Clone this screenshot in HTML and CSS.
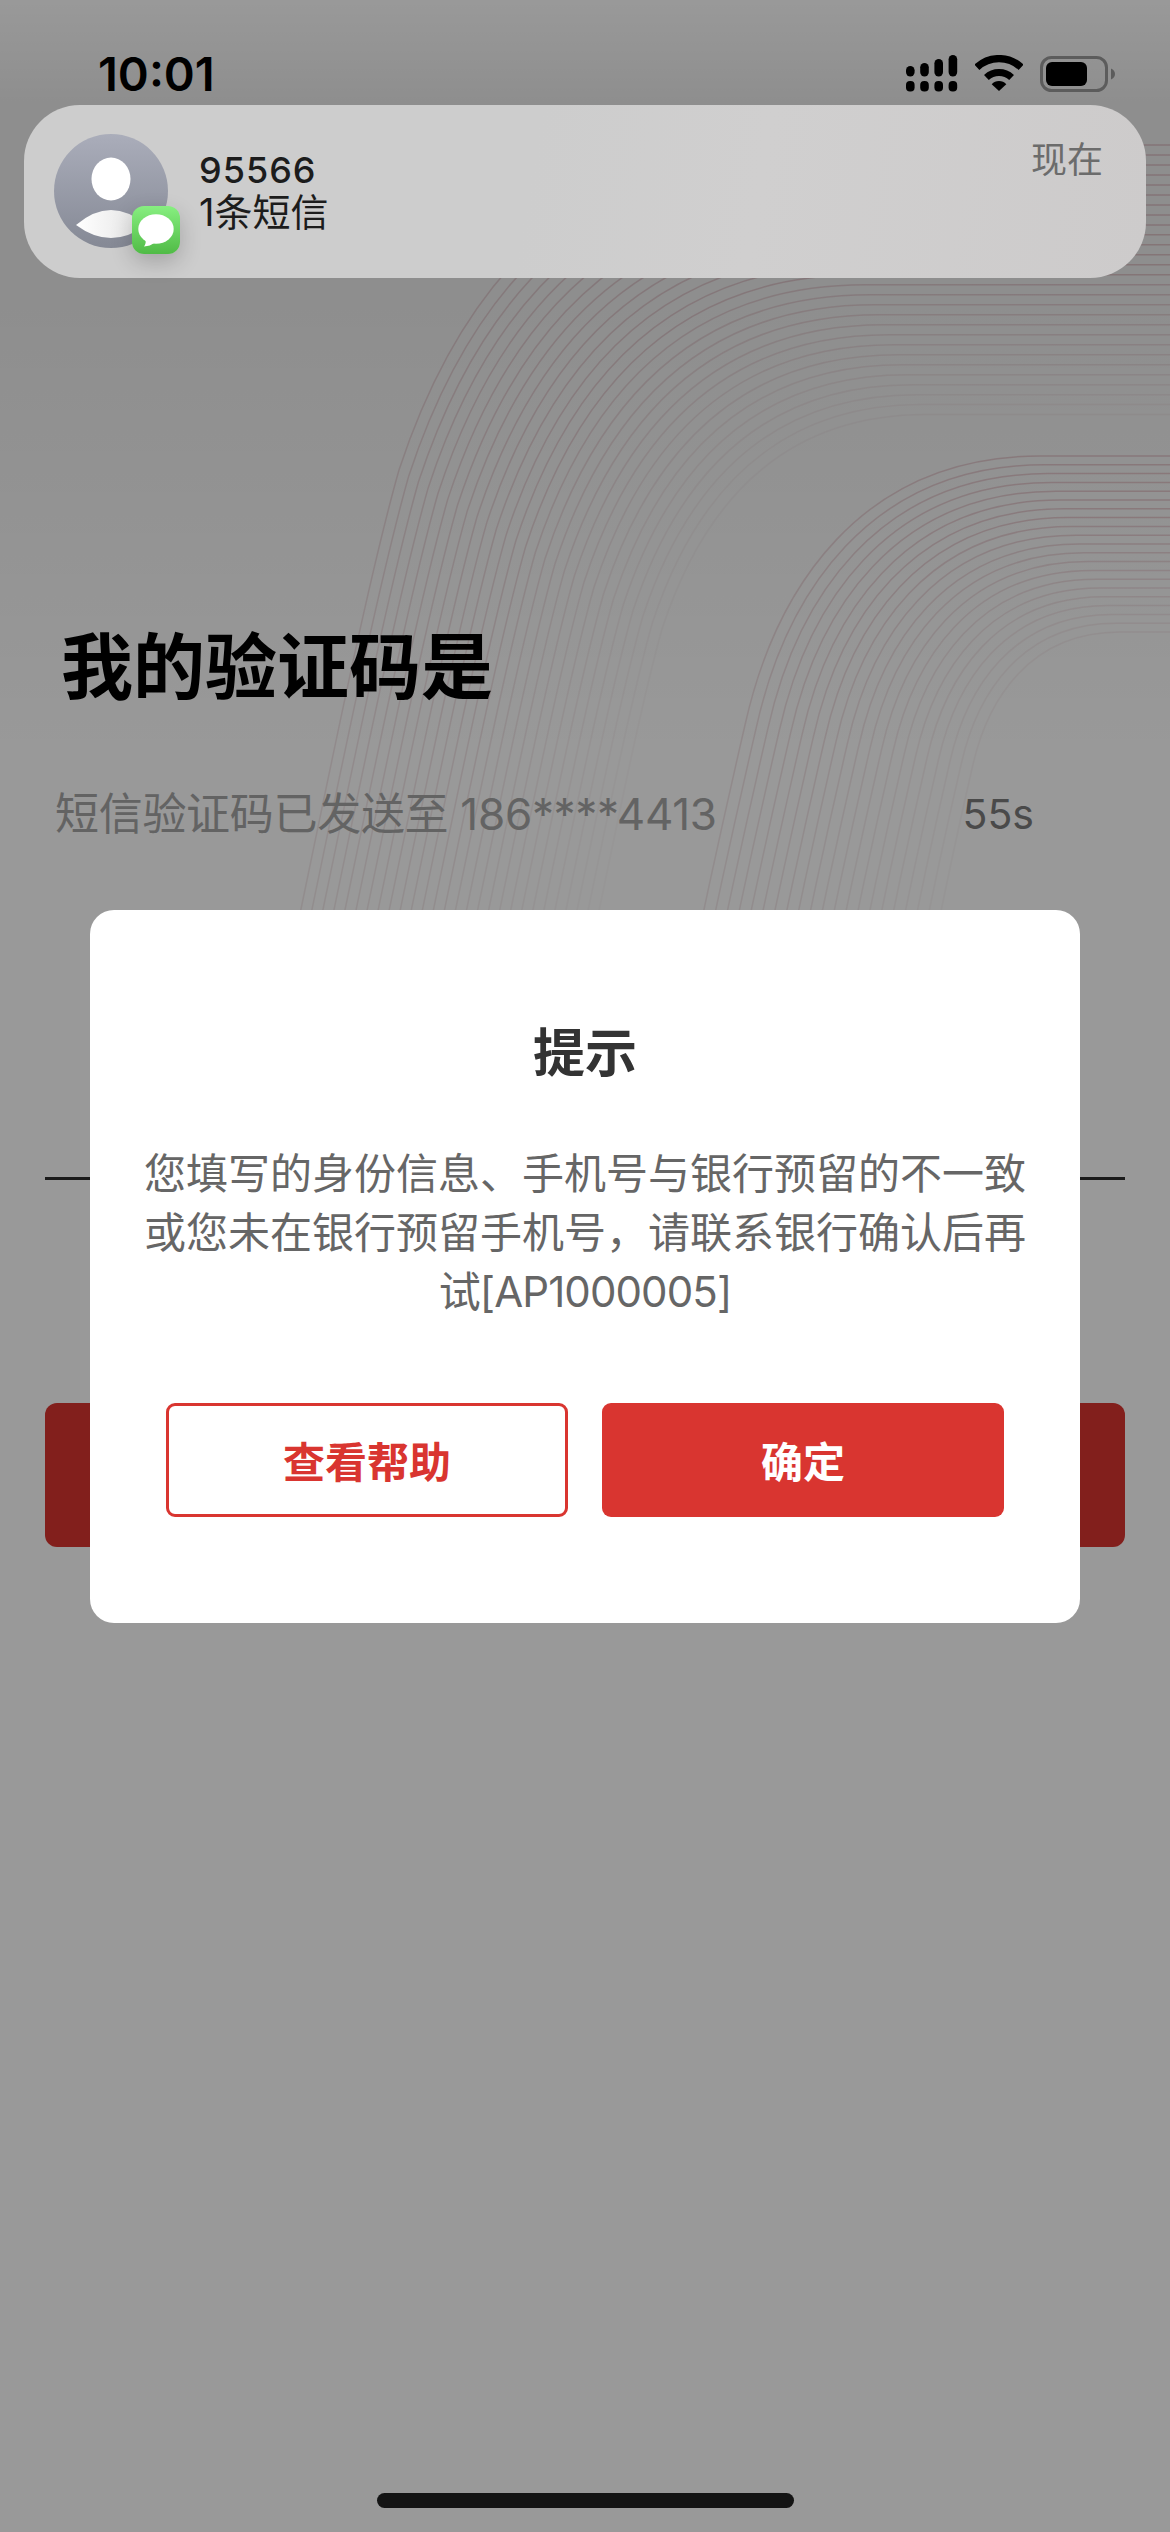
FILE: index.html
```html
<!DOCTYPE html>
<html lang="zh-CN">
<head>
<meta charset="utf-8">
<title>验证码</title>
<link rel="stylesheet" href="styles.css">
</head>
<body>
<div class="phone">
  <svg class="waves" width="1170" height="1000" viewBox="0 0 1170 1000" aria-hidden="true">
    <defs>
      <linearGradient id="fadeA" gradientUnits="userSpaceOnUse" x1="1100" y1="180" x2="320" y2="900">
        <stop offset="0" stop-color="#e6bdc4"/>
        <stop offset=".55" stop-color="#e8cbd0"/>
        <stop offset="1" stop-color="#efe2e4"/>
      </linearGradient>
      <linearGradient id="fadeB" gradientUnits="userSpaceOnUse" x1="1100" y1="460" x2="720" y2="880">
        <stop offset="0" stop-color="#e6bdc4"/>
        <stop offset="1" stop-color="#eee0e2"/>
      </linearGradient>
      <path id="curveA" d="M282 1000C320 820 365 590 399 470C445 330 545 145 800 145L1500 145" fill="none" vector-effect="non-scaling-stroke"/>
      <path id="curveB" d="M665 1100C700 920 730 790 745 725C775 590 860 456 1040 456L1600 456" fill="none" vector-effect="non-scaling-stroke"/>
    </defs>
    <g class="wave-group" stroke="url(#fadeA)">
      <use href="#curveA"/>
      <use href="#curveA" transform="matrix(.9874 0 0 .9874 14.79 11.82)"/>
      <use href="#curveA" transform="matrix(.9747 0 0 .9747 29.58 23.64)"/>
      <use href="#curveA" transform="matrix(.9621 0 0 .9621 44.36 35.46)"/>
      <use href="#curveA" transform="matrix(.9494 0 0 .9494 59.15 47.27)"/>
      <use href="#curveA" transform="matrix(.9368 0 0 .9368 73.94 59.09)"/>
      <use href="#curveA" transform="matrix(.9242 0 0 .9242 88.73 70.91)"/>
      <use href="#curveA" transform="matrix(.9115 0 0 .9115 103.52 82.73)"/>
      <use href="#curveA" transform="matrix(.8989 0 0 .8989 118.31 94.55)"/>
      <use href="#curveA" transform="matrix(.8862 0 0 .8862 133.1 106.37)"/>
      <use href="#curveA" transform="matrix(.8736 0 0 .8736 147.89 118.18)"/>
      <use href="#curveA" transform="matrix(.861 0 0 .861 162.68 130)"/>
      <use href="#curveA" transform="matrix(.8483 0 0 .8483 177.46 141.82)"/>
      <use href="#curveA" transform="matrix(.8357 0 0 .8357 192.25 153.64)"/>
      <use href="#curveA" transform="matrix(.823 0 0 .823 207.04 165.46)" opacity=".85"/>
      <use href="#curveA" transform="matrix(.8104 0 0 .8104 221.83 177.27)" opacity=".8"/>
      <use href="#curveA" transform="matrix(.7978 0 0 .7978 236.62 189.09)" opacity=".75"/>
      <use href="#curveA" transform="matrix(.7851 0 0 .7851 251.41 200.91)" opacity=".7"/>
      <use href="#curveA" transform="matrix(.7725 0 0 .7725 266.2 212.73)" opacity=".65"/>
      <use href="#curveA" transform="matrix(.7598 0 0 .7598 280.99 224.55)" opacity=".6"/>
      <use href="#curveA" transform="matrix(.7472 0 0 .7472 295.78 236.36)" opacity=".55"/>
      <use href="#curveA" transform="matrix(.7346 0 0 .7346 310.57 248.18)" opacity=".5"/>
      <use href="#curveA" transform="matrix(.7219 0 0 .7219 325.36 260)" opacity=".45"/>
      <use href="#curveA" transform="matrix(.7093 0 0 .7093 340.14 271.82)" opacity=".4"/>
      <use href="#curveA" transform="matrix(.6966 0 0 .6966 354.93 283.64)" opacity=".35"/>
      <use href="#curveA" transform="matrix(.684 0 0 .684 369.72 295.45)" opacity=".3"/>
      <use href="#curveA" transform="matrix(.6714 0 0 .6714 384.51 307.27)" opacity=".25"/>
      <use href="#curveA" transform="matrix(.6587 0 0 .6587 399.3 319.09)" opacity=".2"/>
    </g>
    <g class="wave-group" stroke="url(#fadeB)">
      <use href="#curveB"/>
      <use href="#curveB" transform="matrix(.975 0 0 .975 30 20.2)"/>
      <use href="#curveB" transform="matrix(.95 0 0 .95 60 40.4)"/>
      <use href="#curveB" transform="matrix(.925 0 0 .925 90 60.6)"/>
      <use href="#curveB" transform="matrix(.9 0 0 .9 120 80.8)"/>
      <use href="#curveB" transform="matrix(.875 0 0 .875 150 101)"/>
      <use href="#curveB" transform="matrix(.85 0 0 .85 180 121.2)"/>
      <use href="#curveB" transform="matrix(.825 0 0 .825 210 141.4)"/>
      <use href="#curveB" transform="matrix(.8 0 0 .8 240 161.6)" opacity=".9"/>
      <use href="#curveB" transform="matrix(.775 0 0 .775 270 181.8)" opacity=".85"/>
      <use href="#curveB" transform="matrix(.75 0 0 .75 300 202)" opacity=".8"/>
      <use href="#curveB" transform="matrix(.725 0 0 .725 330 222.2)" opacity=".75"/>
      <use href="#curveB" transform="matrix(.7 0 0 .7 360 242.4)" opacity=".7"/>
      <use href="#curveB" transform="matrix(.675 0 0 .675 390 262.6)" opacity=".65"/>
      <use href="#curveB" transform="matrix(.65 0 0 .65 420 282.8)" opacity=".6"/>
      <use href="#curveB" transform="matrix(.625 0 0 .625 450 303)" opacity=".55"/>
      <use href="#curveB" transform="matrix(.6 0 0 .6 480 323.2)" opacity=".5"/>
      <use href="#curveB" transform="matrix(.575 0 0 .575 510 343.4)" opacity=".45"/>
      <use href="#curveB" transform="matrix(.55 0 0 .55 540 363.6)" opacity=".4"/>
      <use href="#curveB" transform="matrix(.525 0 0 .525 570 383.8)" opacity=".35"/>
      <use href="#curveB" transform="matrix(.5 0 0 .5 600 404)" opacity=".3"/>
    </g>
  </svg>

  <main class="page">
    <h1 class="heading">我的验证码是</h1>
    <div class="sent-row">
      <span class="sent-text">短信验证码已发送至 186****4413</span>
      <span class="countdown">55s</span>
    </div>
    <div class="code-line"></div>
    <div class="next-button"></div>
  </main>

  <div class="scrim"></div>
  <div class="top-shade"></div>

  <header class="status">
    <span class="clock">10:01</span>
    <div class="status-icons">
      <svg class="icon-signal" width="52" height="37" viewBox="0 0 52 37" aria-hidden="true">
        <rect x="0" y="11" width="8.6" height="10.4" rx="4.3"/>
        <rect x="14.2" y="8" width="8.6" height="13.4" rx="4.3"/>
        <rect x="28.4" y="4" width="8.6" height="17.4" rx="4.3"/>
        <rect x="42.6" y="0" width="8.6" height="21.4" rx="4.3"/>
        <rect x="0" y="26" width="8.6" height="10.6" rx="4"/>
        <rect x="14.2" y="26" width="8.6" height="10.6" rx="4"/>
        <rect x="28.4" y="26" width="8.6" height="10.6" rx="4"/>
        <rect x="42.6" y="26" width="8.6" height="10.6" rx="4"/>
      </svg>
      <svg class="icon-wifi" width="48" height="36" viewBox="0 0 48 36" aria-hidden="true">
        <path class="wifi-band" stroke-width="7.3" d="M1.9 12.3A32.4 32.4 0 0 1 46.1 12.3"/>
        <path class="wifi-band" stroke-width="7" d="M11.4 22.5A18.5 18.5 0 0 1 36.6 22.5"/>
        <path d="M24 36L16.7 29.2A10 10 0 0 1 31.3 29.2Z"/>
      </svg>
      <svg class="icon-battery" width="75" height="36" viewBox="0 0 75 36" aria-hidden="true">
        <rect class="battery-shell" x="1.5" y="1.5" width="65" height="33" rx="10"/>
        <rect x="6" y="6" width="41" height="24" rx="6"/>
        <path class="battery-nub" d="M71 12.5C73.5 13.5 75 15.5 75 18C75 20.5 73.5 22.5 71 23.5Z"/>
      </svg>
    </div>
  </header>

  <section class="banner">
    <div class="avatar-wrap">
      <svg class="avatar" width="114" height="114" viewBox="0 0 114 114" aria-hidden="true">
        <defs>
          <linearGradient id="avatarBg" x1="0" y1="0" x2="0" y2="1">
            <stop offset="0" stop-color="#aaadba"/>
            <stop offset="1" stop-color="#858995"/>
          </linearGradient>
          <linearGradient id="avatarBody" x1="0" y1="0" x2="1" y2="0">
            <stop offset="0" stop-color="#ffffff"/>
            <stop offset="1" stop-color="#e2e2e2"/>
          </linearGradient>
        </defs>
        <circle cx="57" cy="57" r="57" fill="url(#avatarBg)"/>
        <ellipse cx="57" cy="45" rx="19.5" ry="21.5" fill="#fff"/>
        <path d="M22 91Q57 61 92 91Q57 117 22 91Z" fill="url(#avatarBody)"/>
      </svg>
      <div class="badge">
        <svg width="48" height="48" viewBox="0 0 48 48" aria-hidden="true">
          <ellipse cx="24" cy="23" rx="17.7" ry="14.7" fill="#fff"/>
          <path d="M13.5 32Q14.5 37 12 40.5Q18.5 40 22 37Z" fill="#fff"/>
        </svg>
      </div>
    </div>
    <div class="banner-text">
      <div class="banner-title">95566</div>
      <div class="banner-body">1条短信</div>
    </div>
    <span class="banner-time">现在</span>
  </section>

  <div class="modal-layer">
    <div class="modal">
      <h2 class="modal-title">提示</h2>
      <p class="modal-text">您填写的身份信息、手机号与银行预留的不一致或您未在银行预留手机号，请联系银行确认后再<span class="modal-last">试[AP1000005]</span></p>
      <div class="modal-actions">
        <button class="btn btn-outline" type="button">查看帮助</button>
        <button class="btn btn-solid" type="button">确定</button>
      </div>
    </div>
  </div>

  <div class="home-bar"></div>
</div>
</body>
</html>
```

FILE: styles.css
```css
* { box-sizing: border-box; }

html, body {
  margin: 0;
  padding: 0;
  background: #fff;
}

body {
  font-family: Inter, "Noto Sans CJK SC", "Noto Sans", sans-serif;
}

.phone {
  position: relative;
  width: 1170px;
  height: 2532px;
  overflow: hidden;
  background: #fff;
}

.waves {
  position: absolute;
  left: 0;
  top: 0;
}

.wave-group {
  stroke-width: 1.5;
  fill: none;
  opacity: .68;
}

/* underlying page */
.page {
  position: relative;
  padding: 631px 45px 0;
}

.heading {
  margin: 0 0 0 16px;
  font-size: 72px;
  line-height: 72px;
  font-weight: 700;
  color: #000;
}

.sent-row {
  display: flex;
  align-items: center;
  margin: 81px 0 0 10px;
  height: 60px;
  color: #a6a6a6;
}

.sent-text {
  font-size: 44px;
  line-height: 60px;
  letter-spacing: -.3px;
}

.countdown {
  position: relative;
  margin-left: auto;
  margin-right: 91px;
  font-size: 41px;
  line-height: 60px;
  color: #7c7c7c;
}

.code-line {
  height: 3px;
  margin-top: 333px;
  background: #2e2e2e;
}

.next-button {
  height: 144px;
  margin-top: 223px;
  border-radius: 12px;
  background: #d93530;
}

/* dimming layers */
.scrim {
  position: absolute;
  inset: 0;
  background: rgba(0, 0, 0, .4);
}

.top-shade {
  position: absolute;
  left: 0;
  right: 0;
  top: 0;
  height: 760px;
  background: linear-gradient(180deg, rgba(0, 0, 0, 0) 0, rgba(0, 0, 0, .075) 105px, rgba(0, 0, 0, .075) 290px, rgba(0, 0, 0, 0) 100%);
}

/* status bar */
.status {
  position: absolute;
  left: 0;
  right: 0;
  top: 48px;
  display: flex;
  justify-content: space-between;
  align-items: flex-start;
  padding: 0 55px 0 98px;
}

.clock {
  font-size: 47px;
  line-height: 52px;
  font-weight: 600;
  color: #000;
}

.status-icons {
  display: flex;
  align-items: flex-start;
  gap: 17px;
  padding-top: 7px;
}

.icon-wifi { fill: #000; }
.icon-signal { fill: #000; }
.icon-battery { fill: #000; margin-top: 1px; }

.wifi-band {
  fill: none;
  stroke: #000;
}

.battery-shell {
  fill: none;
  stroke: #5c5c5c;
  stroke-width: 3;
}

.battery-nub { fill: #5c5c5c; }

/* notification */
.banner {
  position: absolute;
  left: 24px;
  right: 24px;
  top: 105px;
  height: 173px;
  display: flex;
  align-items: flex-start;
  padding: 29px 43px 0 30px;
  border-radius: 56px;
  background: linear-gradient(100deg, #cdcdcd 0, #cdcdcd 45%, #d0cfcf 65%, #cdcbcb 100%);
}

.avatar-wrap {
  position: relative;
  width: 114px;
  height: 114px;
  flex: none;
}

.avatar { display: block; }

.badge {
  position: absolute;
  left: 78px;
  top: 72px;
  width: 48px;
  height: 48px;
  border-radius: 12px;
  background: linear-gradient(180deg, #87ef80 0, #50bb46 100%);
  box-shadow: 0 8px 22px rgba(0, 0, 0, .2);
}

.badge svg { display: block; }

.banner-text {
  margin: 15px 0 0 31px;
  color: #1c1c1c;
}

.banner-title {
  font-size: 36px;
  line-height: 42px;
  font-weight: 500;
  letter-spacing: 1px;
}

.banner-body {
  font-size: 38px;
  line-height: 42px;
}

.banner-time {
  margin: 6px 0 0 auto;
  font-size: 36px;
  line-height: 40px;
  color: #6c6c6c;
}

/* modal */
.modal-layer {
  position: absolute;
  inset: 0;
  display: flex;
  align-items: center;
  justify-content: center;
}

.modal {
  width: 990px;
  height: 713px;
  padding: 112px 53px 0;
  border-radius: 24px;
  background: #fff;
}

.modal-title {
  margin: 0;
  text-align: center;
  font-size: 52px;
  line-height: 64px;
  font-weight: 700;
  color: #333;
}

.modal-text {
  margin: 58px 0 0;
  text-align: center;
  font-size: 42px;
  line-height: 59px;
  color: #666;
}

.modal-last {
  display: block;
  letter-spacing: -.9px;
}

.modal-actions {
  display: flex;
  justify-content: center;
  gap: 34px;
  margin-top: 82px;
}

.btn {
  width: 402px;
  height: 114px;
  border-radius: 9px;
  font-family: inherit;
  font-size: 42px;
  font-weight: 700;
  padding: 0;
}

.btn-outline {
  border: 3px solid #d93530;
  background: #fff;
  color: #d93530;
}

.btn-solid {
  border: 0;
  background: #d93530;
  color: #fff;
}

.home-bar {
  position: absolute;
  left: 377px;
  top: 2493px;
  width: 417px;
  height: 15px;
  border-radius: 8px;
  background: #141414;
}
```
